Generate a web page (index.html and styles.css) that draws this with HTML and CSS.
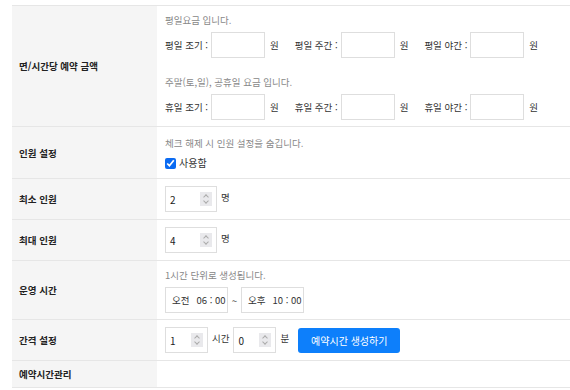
FILE: index.html
```html
<!DOCTYPE html>
<html lang="ko">

<head>
    <meta charset="utf-8">
    <link rel="stylesheet" href="styles.css">
</head>

<body>

    <div class="form-table">
        <div class="row row-stub"></div>

        <!-- 요금 -->
        <div class="row">
            <div class="th">면/시간당 예약 금액</div>
            <div class="td">
                <p class="hint">평일요금 입니다.</p>
                <div class="price-line">
                    <label class="price">평일 조기 : <input class="box price-input" type="text"> <span>원</span></label>
                    <label class="price">평일 주간 : <input class="box price-input" type="text"> <span>원</span></label>
                    <label class="price">평일 야간 : <input class="box price-input" type="text"> <span>원</span></label>
                </div>
                <p class="hint hint-gap">주말(토,일), 공휴일 요금 입니다.</p>
                <div class="price-line">
                    <label class="price">휴일 조기 : <input class="box price-input" type="text"> <span>원</span></label>
                    <label class="price">휴일 주간 : <input class="box price-input" type="text"> <span>원</span></label>
                    <label class="price">휴일 야간 : <input class="box price-input" type="text"> <span>원</span></label>
                </div>
            </div>
        </div>

        <!-- 인원 -->
        <div class="row">
            <div class="th">인원 설정</div>
            <div class="td td-people">
                <p class="hint">체크 해제 시 인원 설정을 숨깁니다.</p>
                <label class="check"><input type="checkbox" checked> 사용함</label>
            </div>
        </div>

        <div class="row">
            <div class="th">최소 인원</div>
            <div class="td td-inline">
                <div class="box num num-wide"><span class="num-val">2</span><span class="spin"><i class="up"></i><i class="down"></i></span></div>
                <span class="unit">명</span>
            </div>
        </div>

        <div class="row">
            <div class="th">최대 인원</div>
            <div class="td td-inline">
                <div class="box num num-wide"><span class="num-val">4</span><span class="spin"><i class="up"></i><i class="down"></i></span></div>
                <span class="unit">명</span>
            </div>
        </div>

        <!-- 시간 -->
        <div class="row">
            <div class="th">운영 시간</div>
            <div class="td">
                <p class="hint">1시간 단위로 생성됩니다.</p>
                <div class="time-line">
                    <div class="box time"><span>오전</span><span>06 : 00</span></div>
                    <span class="tilde">~</span>
                    <div class="box time"><span>오후</span><span>10 : 00</span></div>
                </div>
            </div>
        </div>

        <div class="row">
            <div class="th">간격 설정</div>
            <div class="td td-inline">
                <div class="box num"><span class="num-val">1</span><span class="spin"><i class="up"></i><i class="down"></i></span></div>
                <span class="unit">시간</span>
                <div class="box num"><span class="num-val">0</span><span class="spin"><i class="up"></i><i class="down"></i></span></div>
                <span class="unit">분</span>
                <button class="btn-primary" type="button">예약시간 생성하기</button>
            </div>
        </div>

        <div class="row row-last">
            <div class="th">예약시간관리</div>
            <div class="td"></div>
        </div>
    </div>

</body>

</html>
```

FILE: styles.css
```css
body {
    margin: 0;
    font-family: "Noto Sans CJK KR", "Noto Sans", sans-serif;
    color: #222;
    background: #fff;
}

.form-table {
    padding-left: 12px;
}

.row {
    display: flex;
    border-bottom: 1px solid #e6e6e6;
}

.row-stub {
    height: 5px;
}

.th {
    width: 138px;
    flex: none;
    display: flex;
    align-items: center;
    padding-left: 7px;
    background: #f5f5f5;
    font-size: 9.5px;
    font-weight: bold;
    color: #222;
}

.td {
    flex: 1;
    padding: 6px 8px 6px 8px;
    font-size: 9.5px;
}

.hint {
    margin: 0 0 4px;
    line-height: 16px;
    color: #888;
}

.hint-gap {
    margin-top: 16px;
}

.box {
    box-sizing: border-box;
    height: 26px;
    border: 1px solid #dedede;
    background: #fff;
}

/* 요금 */
.price-line {
    display: flex;
    gap: 16px;
}

.price {
    display: flex;
    align-items: center;
    gap: 3px;
    color: #333;
}

.price-input {
    width: 54px;
    margin: 0;
    padding: 0 4px;
    outline: none;
}

.price span {
    margin-left: 2px;
}

/* 인원 */
.td-people {
    padding-top: 8px;
    padding-bottom: 7px;
}

.check {
    display: flex;
    align-items: center;
    gap: 3px;
    line-height: 16px;
    font-size: 10px;
    color: #333;
}

.check input {
    width: 11px;
    height: 11px;
    margin: 0;
    accent-color: #0b6bf2;
}

.td-inline {
    display: flex;
    align-items: center;
    padding-top: 7px;
    padding-bottom: 7px;
}

.num {
    width: 43px;
    display: flex;
    align-items: center;
    justify-content: space-between;
    padding: 0 4px 0 4px;
    font-size: 10px;
}

.num-wide {
    width: 52px;
}

.num-val {
    padding-top: 1px;
}

.spin {
    width: 12px;
    height: 14px;
    background: #e9e9ec;
    display: flex;
    flex-direction: column;
    align-items: center;
    justify-content: center;
    gap: 2px;
}

.spin i {
    width: 3px;
    height: 3px;
    border-left: 1px solid #aaa;
    border-top: 1px solid #aaa;
}

.spin .up {
    transform: translateY(1px) rotate(45deg);
}

.spin .down {
    transform: translateY(-1px) rotate(225deg);
}

.unit {
    margin: 0 4px 0 4px;
    font-size: 9.5px;
    align-self: flex-start;
    padding-top: 4px;
    color: #333;
}

/* 운영 시간 */
.time-line {
    display: flex;
    align-items: center;
}

.time {
    width: 63px;
    display: flex;
    align-items: center;
    gap: 7px;
    padding-left: 6px;
    font-size: 9.5px;
    white-space: nowrap;
    color: #333;
}

.tilde {
    width: 13px;
    text-align: center;
    font-size: 10px;
    color: #555;
}

.btn-primary {
    margin-left: 5px;
    width: 102px;
    height: 25px;
    border: 0;
    border-radius: 3px;
    background: #0d7ffb;
    color: #fff;
    font-family: inherit;
    font-size: 10px;
    cursor: pointer;
}

.row-last .td {
    height: 14px;
}
```
